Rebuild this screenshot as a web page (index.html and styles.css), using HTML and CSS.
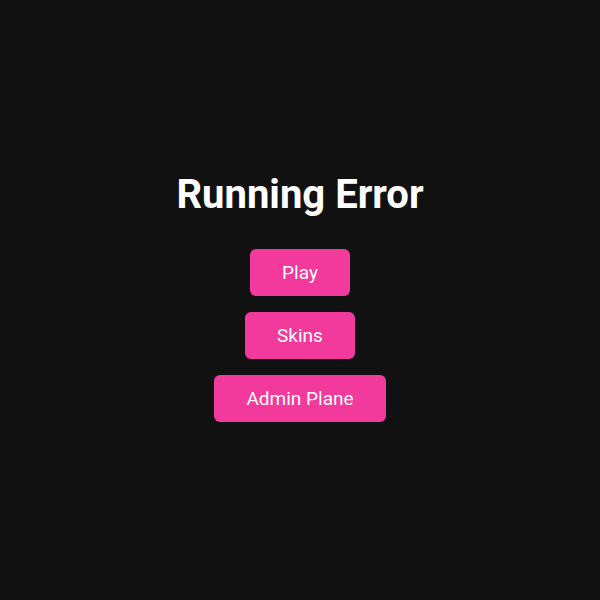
FILE: index.html
```html
<!DOCTYPE html>
<html>
<head>
<meta charset="utf-8">
<link rel="stylesheet" href="styles.css">
</head>
<body>
<main class="menu">
  <h1 class="title">Running Error</h1>
  <button class="btn">Play</button>
  <button class="btn">Skins</button>
  <button class="btn">Admin Plane</button>
</main>
</body>
</html>
```
FILE: styles.css
```css
html, body {
  margin: 0;
  padding: 0;
  height: 100%;
  background: #111111;
  font-family: Roboto, "Liberation Sans", sans-serif;
}
.menu {
  box-sizing: border-box;
  height: 100%;
  padding-bottom: 6px;
  display: flex;
  flex-direction: column;
  align-items: center;
  justify-content: center;
  gap: 16px;
}
.title {
  margin: 0 0 15px;
  color: #ffffff;
  font-size: 40px;
  font-weight: 700;
  line-height: 46px;
}
.btn {
  border: none;
  border-radius: 6px;
  background: #f2399c;
  color: #ffffff;
  font-family: Roboto, "Liberation Sans", sans-serif;
  font-size: 19px;
  line-height: 23px;
  padding: 12px 32px;
}
```
